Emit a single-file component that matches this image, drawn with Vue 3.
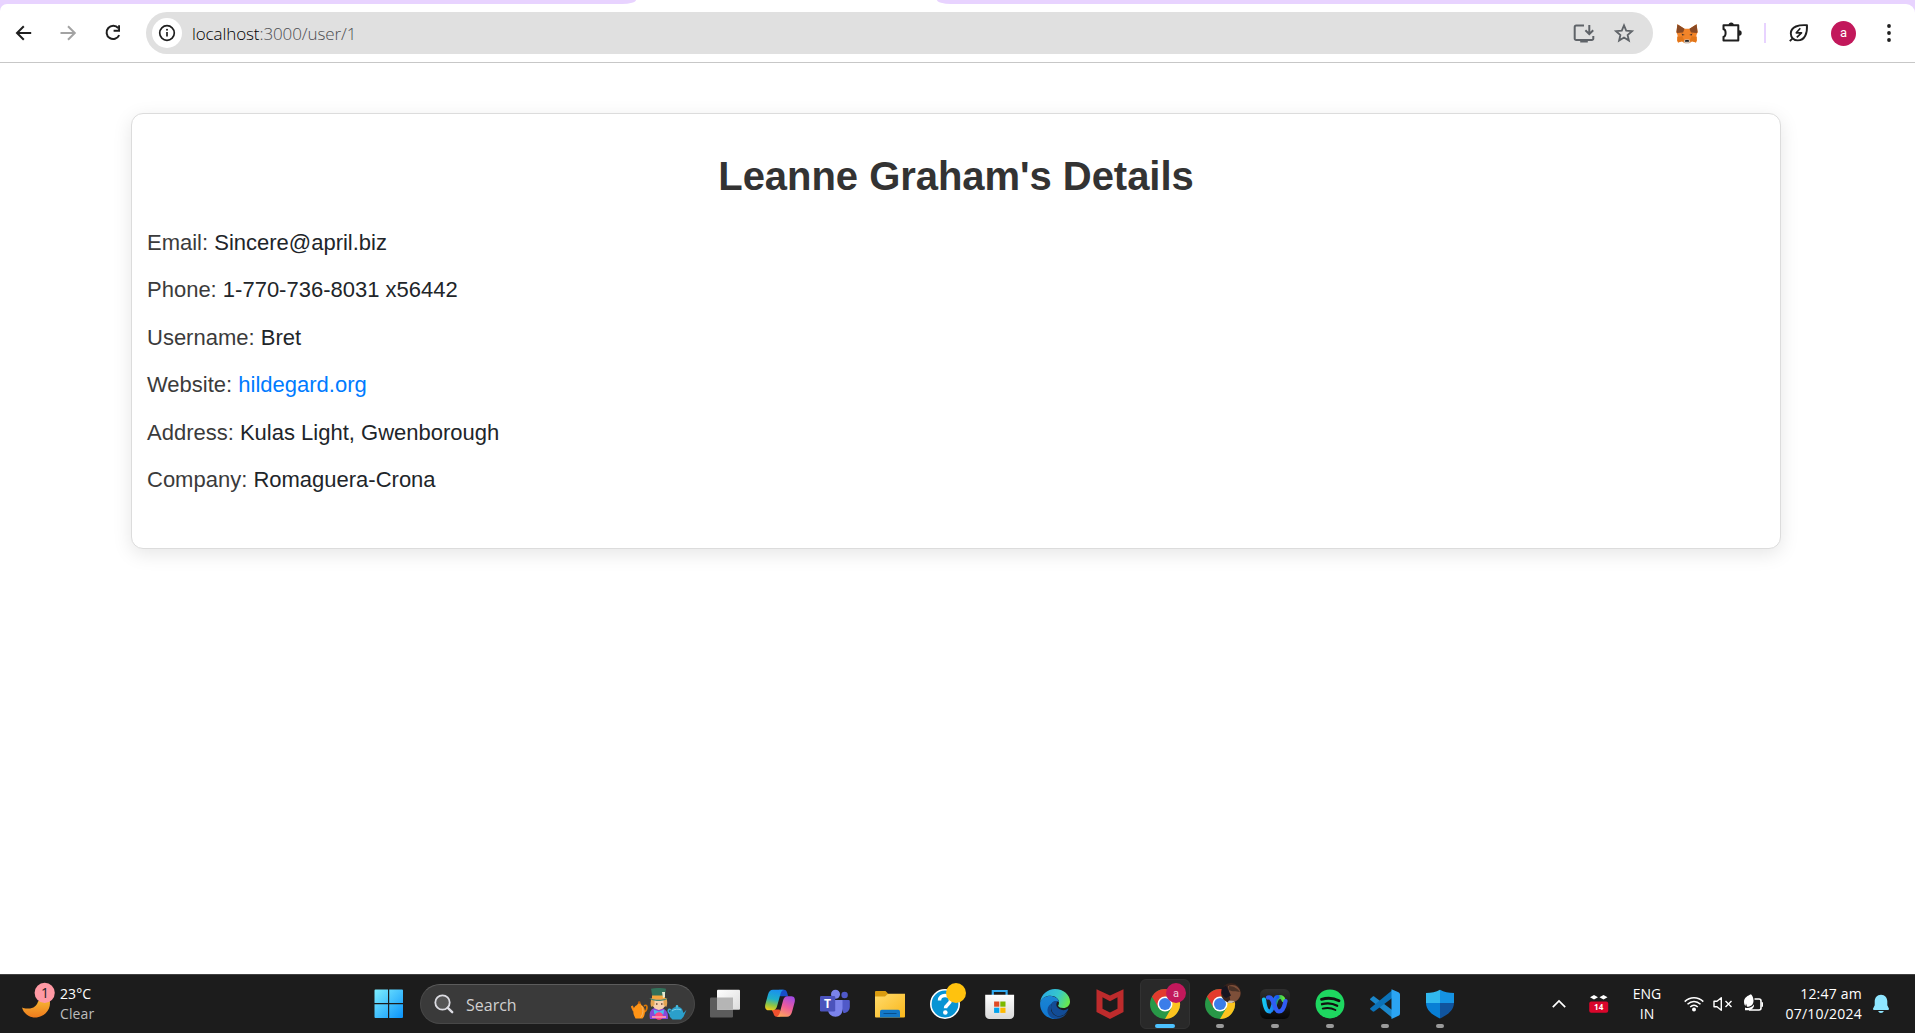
<script setup>
const title = "Leanne Graham's Details"
const details = [
  { label: 'Email', value: 'Sincere@april.biz' },
  { label: 'Phone', value: '1-770-736-8031 x56442' },
  { label: 'Username', value: 'Bret' },
  { label: 'Website', value: 'hildegard.org', link: true },
  { label: 'Address', value: 'Kulas Light, Gwenborough' },
  { label: 'Company', value: 'Romaguera-Crona' },
]
</script>

<template>
  <div class="screen">
    <header class="browser">
      <div class="tabstrip">
        <div class="strip strip-left"></div>
        <div class="strip strip-right"></div>
      </div>
      <div class="toolbar-wrap">
        <div class="toolbar">
          <svg class="ic back" viewBox="0 0 24 24"><path d="M19.2 12H5.2M11.8 5.2L5 12l6.800 6.800" fill="none" stroke="#1f1f1f" stroke-width="2" /></svg>
          <svg class="ic forward" viewBox="0 0 24 24"><path d="M4.500 12h14M12 5.200l6.800 6.800-6.800 6.800" fill="none" stroke="#a3a3a3" stroke-width="2" /></svg>
          <svg class="ic reload" viewBox="0 0 24 24"><path d="M17.300 7.200A6.600 6.600 0 1 0 18.200 14.200" fill="none" stroke="#1f1f1f" stroke-width="2" /><path d="M19 4.200v6.600h-6.400v-2h4.500V4.200z" fill="#1f1f1f" /></svg>
          <div class="omnibox">
            <span class="site-info">
              <svg width="20" height="20" viewBox="0 0 20 20"><circle cx="10" cy="10" r="7.300" fill="none" stroke="#1f1f1f" stroke-width="1.700" /><path d="M10 9v4.600" stroke="#1f1f1f" stroke-width="1.700" /><circle cx="10" cy="6.700" r="1" fill="#1f1f1f" /></svg>
            </span>
            <span class="url"><b>localhost</b>:3000/user/1</span>
            <svg class="ic" viewBox="0 0 24 24"><g fill="none" stroke="#5f6368" stroke-width="2"><path d="M12 4.500H4.200a1.500 1.500 0 0 0-1.500 1.500v11.400a1.500 1.500 0 0 0 1.500 1.500h15.600a1.500 1.500 0 0 0 1.500-1.500V15" /><path d="M17.300 4v9M13.400 9.300l3.900 3.900 3.900-3.900" /></g><path d="M8.200 18.500h7.600v3H8.200z" fill="#5f6368" /></svg>
            <svg class="ic star" viewBox="0 0 24 24"><path d="M12 4.400l2.200 5.300 5.800.5-4.400 3.800 1.300 5.600-4.900-3-4.900 3 1.300-5.600L4 10.200l5.800-.5z" fill="none" stroke="#5f6368" stroke-width="1.800" /></svg>
          </div>
          <svg class="ic fox" viewBox="0 0 24 24"><path d="M2.400 3.200l7.100 4.500h5l7.100-4.500 1 8-1.200 3 .6 5.200-1 2-4-1.200-2.400 1.900H9.400L7 20.200l-4 1.200-1-2 .6-5.200-1.200-3z" fill="#f28429" /><path d="M2.400 3.200l7.100 4.500-1.400 3.700-5.900.6-.8-.8zM21.600 3.200l-7.100 4.500 1.400 3.700 5.900.6.8-.8z" fill="#8a4a24" /><path d="M2.300 16l5-.8 3 6.500H9.400L7 20.200l-4 1.200zM21.700 16l-5-.8-3 6.500h.9l2.400-1.500 4 1.200z" fill="#e2771b" /><path d="M6.600 12.500l3.200 1.400-2.600.5zM17.400 12.500l-3.200 1.400 2.600.5z" fill="#4a3427" /><path d="M9.800 18.600h4.400l1 2-1 1.900H9.800l-1-1.900z" fill="#cfc2b8" /><path d="M10.300 19h3.400l.3 1.800h-4z" fill="#222" /></svg>
          <svg class="ic puzzle" viewBox="0 0 24 24"><path d="M3.500 4.300H18.300V19.600H3.500V15.800A2.100 3.800 0 0 0 3.500 8.200Z" fill="none" stroke="#1f1f1f" stroke-width="2" stroke-linejoin="round" /><path d="M8.600 4a2.600 2.600 0 0 1 5.200 0zM19 9.300a2.700 2.700 0 0 1 0 5.400z" fill="#1f1f1f" /></svg>
          <span class="divider"></span>
          <svg class="ic leaf" viewBox="0 0 24 24"><g fill="none" stroke="#1f1f1f" stroke-width="1.900" stroke-linejoin="round"><path d="M20 4.200C12 3.600 3.800 5.500 3.800 12.500c0 4 3.100 6.900 6.900 6.900C18 19.400 20.400 12 20 4.200zM2.800 20.200l3.300-3.300" /><path d="M13.300 7.300l-4 4.500h5.200l-4.700 4.500" stroke-width="1.700" /></g></svg>
          <span class="avatar">a</span>
          <svg class="ic dots" viewBox="0 0 24 24"><g fill="#1f1f1f"><circle cx="12" cy="5" r="1.900" /><circle cx="12" cy="12" r="1.900" /><circle cx="12" cy="19" r="1.900" /></g></svg>
        </div>
      </div>
    </header>

    <main class="page">
      <section class="card">
        <h1>{{ title }}</h1>
        <p v-for="d in details" :key="d.label">
          <span class="label">{{ d.label }}: </span><a v-if="d.link" href="#">{{ d.value }}</a><span v-else>{{ d.value }}</span>
        </p>
      </section>
    </main>

    <footer class="taskbar">
      <div class="weather">
        <svg width="36" height="40" viewBox="0 0 36 40">
          <defs><linearGradient id="moon" x1="0" y1="0" x2="0" y2="1"><stop offset="0" stop-color="#f8c53a" /><stop offset="1" stop-color="#ee7a1c" /></linearGradient></defs>
          <path d="M2 25.500C3.500 31 8.500 35.500 15 35.500c8.500 0 15-6.500 15-14.500 0-4-1.500-6-3-7.500L18 19.500c-1 4.500-5 7.500-11 7-2 0-3.500-.3-5-1z" fill="url(#moon)" />
          <circle cx="24.700" cy="10.800" r="10.100" fill="#ff99a4" />
          <text x="24.900" y="16" text-anchor="middle" font-family="Open Sans, Noto Sans, sans-serif" font-size="14" fill="#222">1</text>
        </svg>
        <div class="weather-text"><span>23°C</span><span class="dim">Clear</span></div>
      </div>

      <svg class="start" width="30" height="30" viewBox="0 0 30 30">
        <defs><linearGradient id="win" gradientUnits="userSpaceOnUse" x1="0" y1="0" x2="29" y2="29"><stop offset="0" stop-color="#7ff0ff" /><stop offset="1" stop-color="#0a93fb" /></linearGradient></defs>
        <path d="M1.500.500H14v13.500H.500V1.500a1 1 0 0 1 1-1zM15.200.500H28a1 1 0 0 1 1 1V14H15.200zM.500 15.300H14V29H1.500a1 1 0 0 1-1-1zM15.200 15.300H29V28a1 1 0 0 1-1 1H15.200z" fill="url(#win)" />
      </svg>

      <div class="search">
        <svg width="20" height="20" viewBox="0 0 20 20"><circle cx="8.500" cy="8.500" r="7.200" fill="#555" stroke="#dcdce2" stroke-width="1.800" /><path d="M13.800 13.800l4.400 4.400" stroke="#dcdce2" stroke-width="2.400" stroke-linecap="round" /></svg>
        <span>Search</span>
        <svg class="hatter" width="56" height="32" viewBox="0 0 56 32">
          <g fill="none" stroke-width="1.700"><path d="M13 18c4-3 4 4 0 6" stroke="#d97706" /><path d="M3 23L.8 18" stroke="#f98b16" stroke-width="2.200" /></g>
          <path d="M8.300 13.500l2.200 3.400c3.500 2 4.300 7 2.500 11.500L11.500 30.500h-7L3.300 28c-2-4-1-9.500 2.700-11z" fill="#ff9416" /><circle cx="8.200" cy="14.500" r="1.300" fill="#b65b0c" /><path d="M10.500 18c2 3 2 8-1 11.500" stroke="#f0b56b" fill="none" />
          <path d="M19 31c-1.500-7 1-11.500 8-11.500S38 24 36.800 31z" fill="#8748d8" />
          <path d="M22 10h12l1 7-3 3.500-4.200 1.500-4-1.500L21 17z" fill="#f8d0ae" />
          <path d="M20.500 10c-1 4-1.500 7 0 9l3-2v-5h9v5l2.800 2c1.500-3 1-6 .2-9z" fill="#e5a552" />
          <path d="M20 .800C25-.3 31-.3 35 .800L33.600 9H21.500z" fill="#32715a" /><path d="M21 7.500h13v3H21z" fill="#f5a63b" /><path d="M18.500 10c5 2.400 13 2.400 18 0-1 4-17 4-18 0z" fill="#438870" /><path d="M31 4h3v5l-2 1z" fill="#e5e8d0" />
          <path d="M25 16h1.500M30 16h1.500" stroke="#604537" stroke-width="1.500" /><path d="M22.500 21.500l5.500 2 5.300-2-1 5-4.300-2-4.500 2z" fill="#4abbed" /><circle cx="28" cy="28" r="3.800" fill="#ff4884" /><path d="M21 29h14" stroke="#f78cad" stroke-width="2" />
          <path d="M41 21c3-3 7.500-3 10 0l1.500 4 3-3.300-3 7-2.500 2.800h-8.500L39 29c-1-2-1-5 2-8z" fill="#2b9fcb" /><path d="M40 22c-3-2-4 1-1 4" fill="none" stroke="#35acd7" stroke-width="1.600" /><circle cx="46" cy="18.400" r="1.300" fill="#46bde0" /><path d="M41 23c2-2 7-2.500 9-1" stroke="#79d3ed" fill="none" />
        </svg>
      </div>

      <nav class="apps">
        <div class="app">
          <svg viewBox="0 0 30 30"><defs><linearGradient id="tv" x1="0" y1="0" x2="1" y2="1"><stop offset="0" stop-color="#fff" /><stop offset="1" stop-color="#dcdcdc" /></linearGradient></defs><rect y="8.500" width="23" height="20" rx="1" fill="#5c5c5c" /><rect x="7" y=".800" width="23" height="20" rx="1" fill="url(#tv)" /><path d="M7 8.500h16v12.300H7z" fill="#b5b5b5" /></svg>
        </div>
        <div class="app">
          <svg viewBox="0 0 30 30"><defs>
            <linearGradient id="cpa" x1=".5" y1="0" x2=".3" y2="1"><stop offset="0" stop-color="#1a90ee" /><stop offset=".45" stop-color="#20b0c8" /><stop offset=".75" stop-color="#8fc544" /><stop offset="1" stop-color="#f0cc1d" /></linearGradient>
            <linearGradient id="cpb" x1=".7" y1="0" x2=".3" y2="1"><stop offset="0" stop-color="#a44be2" /><stop offset=".5" stop-color="#ee5c9b" /><stop offset="1" stop-color="#ffa45c" /></linearGradient></defs>
            <path d="M14 .800h5c2 0 2.700 1.200 3.300 3.500l.8 2.900h-8z" fill="#194fc9" />
            <path d="M6.500 20.500h8l1.800 3.500L15 27.800h-3.300c-2 0-2.700-1.200-3.300-3.500z" fill="#f0512e" />
            <path d="M8 .800h10.800c-2.300.5-3 3-3.800 6l-2.800 10c-.8 2.800-2 4.500-4.500 4.500H3.500C.5 21.300-.3 18.500.3 15.500L3 5.500C3.800 2.500 5.500.800 8 .800z" fill="url(#cpa)" />
            <path d="M22 27.800H11.500c2.300-.5 3-3 3.800-6l2.700-10c.8-2.800 2-4.500 4.500-4.500h4c3 0 3.900 2.800 3.200 5.800L27 23c-.9 3-2.500 4.800-5 4.800z" fill="url(#cpb)" />
          </svg>
        </div>
        <div class="app">
          <svg viewBox="0 0 30 30"><circle cx="24.600" cy="6" r="3.200" fill="#5059c9" /><circle cx="15.500" cy="5.200" r="4.500" fill="#7b83eb" /><path d="M19 11h9.500c.8 0 1.300.5 1.300 1.300v5.200c0 4-2.600 6.500-6.300 6.500z" fill="#5059c9" /><path d="M8 11h14.500v9.500c0 4.500-3 7.200-7 7.200S8 25 8 20.500z" fill="#7b83eb" /><rect y="7" width="15.200" height="15.500" rx="1.200" fill="#4b53bc" /><text x="7.500" y="19.200" text-anchor="middle" font-family="Open Sans, sans-serif" font-weight="700" font-size="12" fill="#fff">T</text></svg>
        </div>
        <div class="app">
          <svg viewBox="0 0 30 30"><defs><linearGradient id="fd" x1="0" y1="0" x2="1" y2="1"><stop offset="0" stop-color="#ffdb6c" /><stop offset="1" stop-color="#f9b71b" /></linearGradient></defs><path d="M0 3a1 1 0 0 1 1-1h9.500L13 4.600V10H0z" fill="#d99b0f" /><path d="M0 7.500h10l3-2.800h17V27.500a1 1 0 0 1-1 1H1a1 1 0 0 1-1-1z" fill="url(#fd)" /><path d="M5 28.500v-6a1.700 1.700 0 0 1 1.700-1.700h16.600a1.700 1.700 0 0 1 1.700 1.700v6z" fill="#1278c8" /><path d="M8.500 24.500h13" stroke="#084f8d" stroke-width="1" /></svg>
        </div>
        <div class="app">
          <svg viewBox="0 0 30 30"><circle cx="15" cy="15" r="14.200" fill="#0794d4" stroke="#fff" stroke-width="1.600" /><path d="M9.500 11.500c0-3 2.300-5 5.500-5s5.500 2 5.500 4.800c0 4-5 4-5 8" fill="none" stroke="#fff" stroke-width="3.400" /><circle cx="15.300" cy="23.500" r="2.300" fill="#fff" /><circle cx="26" cy="4" r="10" fill="#ffc20e" /></svg>
        </div>
        <div class="app">
          <svg viewBox="0 0 30 30"><defs><linearGradient id="st" x1="0" y1="0" x2="0" y2="1"><stop offset="0" stop-color="#fff" /><stop offset="1" stop-color="#d9d9d9" /></linearGradient></defs><path d="M7.800 7.500V2h13.800v5.500" fill="none" stroke="#32aaf0" stroke-width="2.200" /><path d="M.200 5.700h28.900v20a4.300 4.300 0 0 1-4.300 4.300H4.500a4.300 4.300 0 0 1-4.300-4.300z" fill="url(#st)" /><path d="M9.100 12.500h5.200v5.200H9.100z" fill="#e04a25" /><path d="M15.300 12.500h5.200v5.200h-5.200z" fill="#7cb900" /><path d="M9.100 18.700h5.200v5.200H9.100z" fill="#02a2ec" /><path d="M15.300 18.700h5.200v5.200h-5.200z" fill="#fdb902" /></svg>
        </div>
        <div class="app">
          <svg viewBox="0 0 30 30"><defs><linearGradient id="e1" x1="0" y1=".3" x2="1" y2=".6"><stop offset="0" stop-color="#2aa9e4" /><stop offset=".55" stop-color="#36c8cc" /><stop offset="1" stop-color="#6ae84b" /></linearGradient><linearGradient id="e2" x1="0" y1="0" x2="0" y2="1"><stop offset="0" stop-color="#1a85d4" /><stop offset="1" stop-color="#0f76d2" /></linearGradient></defs>
            <path d="M.200 13C1.200 5.500 7.500 0 15 0c8.500 0 15 6 15 12.500 0 4-3 6.500-6.700 6.500-3 0-5.300-.8-5.300-2 0-.7 1-1 1-3.500C19 9.500 15 6.700 10.500 6.700 5.500 6.700 2 9.300.200 13z" fill="url(#e1)" />
            <path d="M.200 13C1.800 9.300 5.500 7 10 7c4.500 0 8.700 2.300 8.900 6.300-1.500-1.600-5.400-1.300-7.200 1.200-2.500 4-1 11 4 14.300L17 30C8 31-1 23.500.200 13z" fill="url(#e2)" />
            <path d="M11.700 14.500c-3 5.500.5 12.500 6.800 13 4 .2 7-2 9.200-5-2.500 4.500-6.500 7.500-12.700 7.500-5-1-8-5.500-7.500-9.500.3-3 2-5 4.200-6z" fill="#124c96" /><path d="M11.700 14.500c1.500-2.400 4.300-3 6-2-1.500 2.500-.5 5.500 2 7 3 1.600 6 .9 7.800 0 .8-.3 1 .5.600 1.200C24 28.500 16 29 12.500 23.500c-1.600-2.800-2-6-.8-9z" fill="#124c96" /><path d="M17.700 13c-1.500 3-.5 5 2 6.500 3 1.600 6 .9 7.800 0" fill="none" stroke="#1c1c1c" stroke-width="1.300" /></svg>
        </div>
        <div class="app">
          <svg viewBox="0 0 30 30"><path d="M1.500.300L15 6.500 28.500.300V23L15 30 1.500 23zM7.500 8.300v11.500L15 23.500l7.500-3.700V8.300L15 12.300z" fill="#bd2b2c" fill-rule="evenodd" /></svg>
        </div>
        <div class="app active">
          <svg viewBox="0 0 30 30"><circle cx="15" cy="15" r="15" fill="#289847" /><path d="M2 7.500A15 15 0 0 1 28 7.500H15L8.500 18.750z" fill="#e33b2e" /><path d="M28 7.500A15 15 0 0 1 15 30l6.500-11.250L15 7.500z" fill="#fcc31e" /><circle cx="15" cy="15" r="7.500" fill="#fff" /><circle cx="15" cy="15" r="6" fill="#3b7de9" /><circle cx="26" cy="4" r="10" fill="#c2185b" /><text x="26" y="7.500" text-anchor="middle" font-family="Roboto, sans-serif" font-size="11" fill="#f3d0de">a</text></svg>
          <i></i>
        </div>
        <div class="app">
          <svg viewBox="0 0 30 30"><circle cx="15" cy="15" r="15" fill="#289847" /><path d="M2 7.500A15 15 0 0 1 28 7.500H15L8.500 18.750z" fill="#e33b2e" /><path d="M28 7.500A15 15 0 0 1 15 30l6.500-11.250L15 7.500z" fill="#fcc31e" /><circle cx="15" cy="15" r="7.500" fill="#fff" /><circle cx="15" cy="15" r="6" fill="#3b7de9" /><circle cx="26" cy="4" r="10" fill="#38231c" /><path d="M23-3c6-3 12 1 12.500 7 0 6-5 9.500-10 9z" fill="#7d4f39" /><path d="M24-3c5 0 9 3 11 6-4-1-8 0-11-2z" fill="#493126" /><path d="M17-1l4-2.500 5 10-5 2.500c-4-2-5-6-4-10z" fill="#171520" /><path d="M24 11.500l6 .5-3 2h-5z" fill="#c9bbb0" /></svg>
          <i></i>
        </div>
        <div class="app">
          <svg viewBox="0 0 30 30"><defs><linearGradient id="wx" x1="0" y1="0" x2="0" y2="1"><stop offset="0" stop-color="#303030" /><stop offset="1" stop-color="#070707" /></linearGradient><linearGradient id="wxg" x1="0" y1="0" x2="1" y2="0"><stop offset="0" stop-color="#0d7f96" /><stop offset="1" stop-color="#5be83d" /></linearGradient><linearGradient id="wxb" x1="0" y1="0" x2="1" y2="0"><stop offset="0" stop-color="#14c8ef" /><stop offset="1" stop-color="#1b56ef" /></linearGradient></defs><rect width="30" height="30" rx="6" fill="url(#wx)" />
          <g fill="none" stroke-width="4.200" stroke-linecap="round"><path d="M14.500 18c1-6 2-10 5.500-10 2 0 3 1.200 3.500 3" stroke="url(#wxg)" /><path d="M4 10.500c1 8 2.500 12 5.500 12 4 0 4-14.500 8-14.500" stroke="url(#wxb)" /><path d="M8 8.500c6-2 6 14 11 14 3.500 0 5.500-5 6.500-10.500" stroke="#315cf4" /></g></svg>
          <i></i>
        </div>
        <div class="app">
          <svg viewBox="0 0 30 30"><circle cx="15" cy="15" r="14.400" fill="#1ed760" /><g fill="none" stroke="#111" stroke-linecap="round"><path d="M6.500 10.300c6-1.700 12.500-1.100 17.500 1.500" stroke-width="2.800" /><path d="M7 15.200c5.200-1.500 10.700-.9 15.200 1.500" stroke-width="2.300" /><path d="M7.700 19.600c4.500-1.200 9-.7 12.700 1.400" stroke-width="1.900" /></g></svg>
          <i></i>
        </div>
        <div class="app">
          <svg viewBox="0 0 30 30"><path d="M.500 9.500l2-1.800c.7-.5 1.400-.5 2 0L22.500 21.200V29L.500 11c-.6-.5-.6-1 0-1.500z" fill="#1b87ca" /><path d="M.500 20.500l2 1.800c.7.500 1.400.5 2 0L22.500 8.800V1L.500 19c-.6.5-.6 1 0 1.500z" fill="#0b72b8" /><path d="M21.500.200L28.500 3.200A2.500 2.500 0 0 1 30 5.500v19a2.500 2.500 0 0 1-1.500 2.300L21.500 30z" fill="#2ba4f2" /></svg>
          <i></i>
        </div>
        <div class="app">
          <svg viewBox="0 0 30 30"><defs><clipPath id="sh"><path d="M15 .800c4 2.500 8.500 3 14 3.200v9.800C29 21 23 26 15 29.500 7 26 1 21 1 13.800V4C6.500 3.800 11 3.300 15 .800z" /></clipPath></defs><g clip-path="url(#sh)"><path d="M0 0h15v14H0z" fill="#31b9ef" /><path d="M15 0h15v14H15z" fill="#1593e3" /><path d="M0 14h15v16H0z" fill="#087fd5" /><path d="M15 14h15v16H15z" fill="#10549e" /></g></svg>
          <i></i>
        </div>
      </nav>

      <div class="tray">
        <svg class="chev" width="16" height="16" viewBox="0 0 16 16"><path d="M1.800 11.200L8 5l6.200 6.200" fill="none" stroke="#fff" stroke-width="1.700" /></svg>
        <svg class="red" width="20" height="20" viewBox="0 0 20 20"><path d="M1 3.300l4-2.300 4 2.300-4 2.300zM10.500 3.300l4-2.300 4 2.300-4 2.300z" fill="#fff" /><rect x=".200" y="7.500" width="19" height="11.200" rx="2" fill="#d9062b" /><text x="9.700" y="16" text-anchor="middle" font-family="Open Sans, sans-serif" font-weight="700" font-size="8" fill="#fff">14</text></svg>
        <div class="lang"><span>ENG</span><span>IN</span></div>
        <svg class="wifi" width="20" height="18" viewBox="0 0 20 18"><g fill="none" stroke="#fff" stroke-width="1.500"><path d="M.700 6.600c5.400-5.300 13.200-5.300 18.600 0M3.500 9.300c3.900-3.700 9.100-3.700 13 0M6.200 12c2.300-2.200 5.300-2.200 7.600 0" /></g><circle cx="10" cy="14.400" r="2" fill="#fff" /></svg>
        <svg class="vol" width="20" height="18" viewBox="0 0 20 18"><g fill="none" stroke="#fff" stroke-width="1.400"><path d="M1 6.300h3L8.300 2.800v12.400L4 11.700H1z" stroke-linejoin="round" /><path d="M12.500 6l6 6M18.500 6l-6 6" /></g></svg>
        <svg class="bat" width="22" height="20" viewBox="0 0 22 20"><path d="M11.500 5H16a2 2 0 0 1 2 2v7a2 2 0 0 1-2 2H6" fill="none" stroke="#fff" stroke-width="1.600" /><path d="M18.500 8H19a1 1 0 0 1 1 1v3a1 1 0 0 1-1 1h-.500z" fill="#fff" /><path d="M8 .300C5 1.800 1 3.300 1 7.800c0 2 .5 3.200 1.500 4.200L3 9.500l1 3.300c3 0 6.500-1.500 6.500-6C10.500 4 9.500 1.800 8 .300z" fill="#fff" /><path d="M2 13.500c3 1.300 7 0 9-3 .5 3-2.500 5.500-5 5.700H2z" fill="#fff" /></svg>
        <div class="clock"><span>12:47 am</span><span>07/10/2024</span></div>
        <svg class="bell" width="18" height="20" viewBox="0 0 18 20"><path d="M9 .800c4 0 6.300 3 6.300 6.800v3.600l1.700 3.600c.2.700-.2 1.200-1 1.200H2c-.8 0-1.200-.5-1-1.200l1.700-3.600V7.600C2.700 3.800 5 .800 9 .800zM6.200 17h5.600c-.3 1.300-1.500 2-2.800 2s-2.500-.7-2.800-2z" fill="#8fe6ff" /></svg>
      </div>
    </footer>
  </div>
</template>

<style>
body { background: #fff; overflow: hidden; }
</style>

<style scoped>
.screen { width: 1915px; height: 1033px; display: flex; flex-direction: column; background: #fff; overflow: hidden; font-family: "Liberation Sans", Arial, sans-serif; }
.screen * { box-sizing: border-box; }
svg { flex: none; display: block; }
.tabstrip { display: flex; justify-content: space-between; height: 4px; background: #fff; }
.strip { background: #e8d3ff; height: 4px; }
.strip-left { width: 636px; border-bottom-right-radius: 14px 4px; }
.strip-right { width: 978px; border-bottom-left-radius: 14px 4px; }
.toolbar-wrap { background: linear-gradient(90deg, #e8d3ff 20px, #fff 20px, #fff 1890px, #e8d3ff 1890px); }
.toolbar { display: flex; align-items: center; height: 59px; background: #fff; border-bottom: 1px solid #c7c7c7; border-radius: 7px 9px 0 0; }
.ic { width: 24px; height: 24px; }
.back { margin-left: 12px; }
.forward { margin-left: 20px; }
.reload { margin-left: 21px; }
.omnibox { display: flex; align-items: center; margin-left: 21px; width: 1507px; height: 42px; padding: 0 17px 0 6px; border-radius: 21px; background: #e0e0e0; }
.site-info { display: flex; align-items: center; justify-content: center; width: 30px; height: 30px; border-radius: 50%; background: #fff; }
.url { flex: 1; margin-left: 10px; font: 300 17px "Open Sans", "Noto Sans", sans-serif; letter-spacing: -0.1px; color: #4c4d50; white-space: nowrap; }
.url b { font-weight: 300; color: #000; }
.star { margin-left: 16px; }
.fox { margin-left: 22px; }
.puzzle { margin-left: 21px; }
.divider { width: 2px; height: 20px; margin-left: 20px; background: #e8d3ff; }
.leaf { margin-left: 21px; }
.avatar { width: 25px; height: 25px; margin-left: 20px; border-radius: 50%; background: #c2185b; color: #fff; font: 400 13px/23px Roboto, sans-serif; text-align: center; }
.dots { margin-left: 21px; }

.page { flex: 1; padding: 50px 0 0 131px; }
.card { width: 1650px; height: 436px; padding: 37px 15px 0; border: 1px solid #dcdcdc; border-radius: 12px; background: #fff; box-shadow: 0 5px 19px rgba(0, 0, 0, 0.1); }
h1 { margin: 0 0 27.6px; font-size: 40px; line-height: 50px; font-weight: 700; letter-spacing: -0.04px; color: #333; text-align: center; }
p { margin: 0 0 20px; font-size: 22px; line-height: 27.5px; color: #212529; }
.label { color: #3b3b3b; }
p a { color: #007bff; text-decoration: none; }

.taskbar { display: flex; align-items: center; height: 59px; background: #1c1c1c; border-top: 1px solid #414141; color: #fff; font: 400 14px/20px "Open Sans", "Noto Sans", sans-serif; white-space: nowrap; }
.weather { display: flex; align-items: center; width: 354px; margin-left: 20px; }
.weather svg { margin-top: -4px; }
.weather-text { display: flex; flex-direction: column; margin-left: 4px; letter-spacing: 0.1px; }
.dim { color: #bdbdbd; }
.search { display: flex; align-items: center; width: 275px; height: 40px; margin-left: 16px; padding: 0 7px 0 13px; border: 1px solid #484848; border-top-color: #5c5c5c; border-radius: 20px; background: #3a3a3a; }
.search span { margin: 1px 0 0 12px; color: #d0d0d0; font-size: 16px; }
.hatter { margin-left: auto; }
.apps { display: flex; margin-left: 5px; gap: 5px; }
.app { position: relative; display: flex; align-items: center; justify-content: center; width: 50px; height: 50px; border-radius: 6px; }
.app svg { width: 30px; height: 30px; overflow: visible; }
.app i { position: absolute; left: 21px; bottom: 1px; width: 8px; height: 4px; border-radius: 2px; background: #9a9a9a; }
.active { background: #292929; border: 1px solid #323232; }
.active i { left: 14px; bottom: 0; width: 20px; background: #4cc2ff; }
.tray { display: flex; align-items: center; margin-left: 86px; }
.red { margin-left: 22px; }
.lang { display: flex; flex-direction: column; align-items: center; width: 36px; margin-left: 20px; }
.wifi { margin-left: 19px; }
.vol { margin-left: 9px; }
.bat { margin-left: 10px; }
.clock { display: flex; flex-direction: column; align-items: flex-end; width: 91px; margin-left: 6px; letter-spacing: 0.22px; }
.bell { margin-left: 10px; }
</style>
